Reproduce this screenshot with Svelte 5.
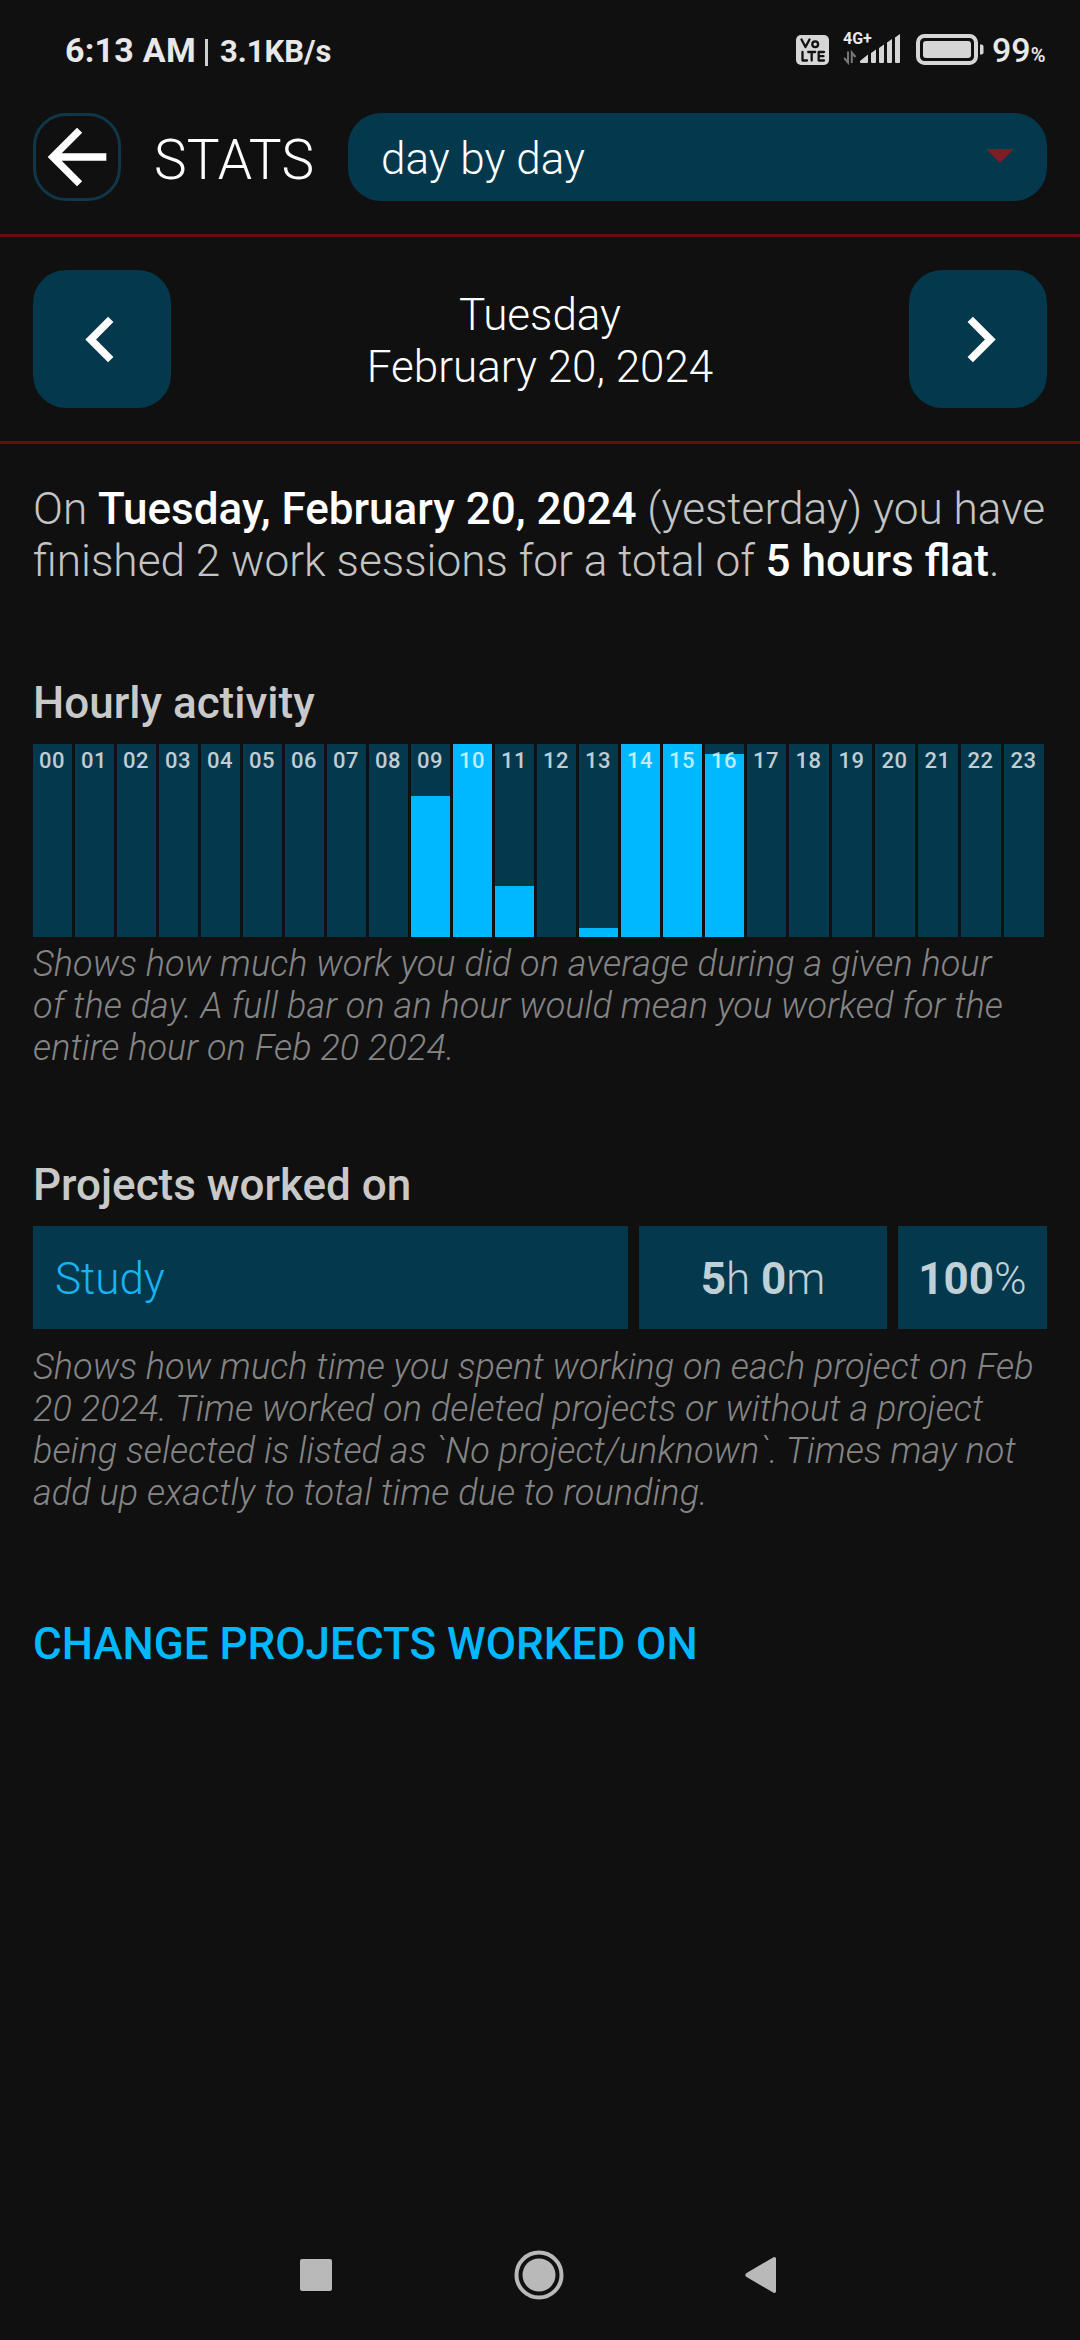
<script>
  const fills = { 9: 141, 10: 193, 11: 51, 13: 9, 14: 193, 15: 193, 16: 183 };
  const hours = Array.from({ length: 24 }, (_, i) => ({
    label: String(i).padStart(2, '0'),
    fill: ((fills[i] ?? 0) / 193) * 100
  }));
</script>

<div class="screen">
  <header class="status">
    <div class="clock"><span class="time">6:13 AM</span><span class="sep"></span><span class="rate">3.1KB/s</span></div>
    <div class="indicators">
      <svg class="volte" width="33" height="30" viewBox="0 0 33 30">
        <rect width="33" height="30" rx="5" fill="#d6d6d6" />
        <g fill="none" stroke="#101010" stroke-width="2.3" stroke-linecap="round" stroke-linejoin="round">
          <path d="M5.500 4.500l4 7.500 4-7.500" />
          <circle cx="19.200" cy="9.200" r="2.900" />
          <path d="M6.500 17v8.500h4.500M12.200 17h7M15.700 17v8.500M28 17h-5.300v8.500H28M22.700 21.200h4.800" />
        </g>
      </svg>
      <div class="mobile">
        <span class="net">4G+</span>
        <svg width="58" height="32" viewBox="0 0 58 32">
          <g fill="none" stroke="#777" stroke-width="2">
            <path d="M5 18.500V29.500L1.200 25M8.800 30V19.500l3.700 4.500" />
          </g>
          <path fill="#d6d6d6" d="M17 28l8-6.500V29a1 1 0 0 1-1 1H18a1 1 0 0 1-1-1zM28 20l5-3.500V29a1 1 0 0 1-1 1h-3a1 1 0 0 1-1-1zM36 15l5-3.500V29a1 1 0 0 1-1 1h-3a1 1 0 0 1-1-1zM44 9.500l5-3.500V29a1 1 0 0 1-1 1h-3a1 1 0 0 1-1-1zM52 4.500l5-3.500V29a1 1 0 0 1-1 1h-3a1 1 0 0 1-1-1z" />
        </svg>
      </div>
      <svg class="battery" width="69" height="31" viewBox="0 0 69 31">
        <rect x="2" y="2" width="58" height="27" rx="6.500" fill="none" stroke="#d6d6d6" stroke-width="4" />
        <rect x="7" y="7" width="48" height="17" rx="3" fill="#d6d6d6" />
        <path d="M64 10.500h1.500a2 2 0 0 1 2 2v6a2 2 0 0 1-2 2H64z" fill="#d6d6d6" />
      </svg>
      <div class="level">99<small>%</small></div>
    </div>
  </header>

  <nav class="toolbar">
    <button class="back" aria-label="Back">
      <svg viewBox="0 0 24 24"><path d="M20 11H7.830l5.590-5.590L12 4l-8 8 8 8 1.410-1.410L7.830 13H20z" /></svg>
    </button>
    <h1>STATS</h1>
    <button class="select">
      <span>day by day</span>
      <svg width="28" height="14" viewBox="0 0 28 14"><path d="M0 0h28L14 14z" /></svg>
    </button>
  </nav>

  <section class="pager">
    <button aria-label="Previous day">
      <svg class="prev" viewBox="0 0 24 24"><path d="M15.410 7.410L14 6l-6 6 6 6 1.410-1.410L10.830 12z" /></svg>
    </button>
    <div class="date">Tuesday<br />February 20, 2024</div>
    <button aria-label="Next day">
      <svg class="next" viewBox="0 0 24 24"><path d="M10 6L8.590 7.410 13.170 12l-4.580 4.590L10 18l6-6z" /></svg>
    </button>
  </section>

  <main>
    <p class="summary">
      On <b>Tuesday, February 20, 2024</b> (yesterday) you have<br />finished 2 work sessions for a total of <b>5 hours flat</b>.
    </p>

    <h2>Hourly activity</h2>
    <div class="chart">
      {#each hours as hour}
        <div class="hour">
          <div class="fill" style="height: {hour.fill}%"></div>
          <span>{hour.label}</span>
        </div>
      {/each}
    </div>
    <p class="note">
      Shows how much work you did on average during a given hour<br />of the day. A full bar on an hour would mean you worked for the<br />entire hour on Feb 20 2024.
    </p>

    <h2>Projects worked on</h2>
    <div class="project">
      <div class="name">Study</div>
      <div class="cell"><b>5</b>h&nbsp;<b>0</b>m</div>
      <div class="cell"><b>100</b>%</div>
    </div>
    <p class="note second">
      Shows how much time you spent working on each project on Feb<br />20 2024. Time worked on deleted projects or without a project<br />being selected is listed as `No project/unknown`. Times may not<br />add up exactly to total time due to rounding.
    </p>

    <button class="change">CHANGE PROJECTS WORKED ON</button>
  </main>

  <footer>
    <svg width="32" height="32" viewBox="0 0 32 32"><rect width="32" height="32" rx="2" /></svg>
    <svg width="50" height="50" viewBox="0 0 50 50">
      <circle cx="25" cy="25" r="22.500" fill="none" stroke="#b9b9b9" stroke-width="4" />
      <circle cx="25" cy="25" r="16.500" />
    </svg>
    <svg width="32" height="38" viewBox="0 0 32 38"><path d="M1.200 17.200L28.500 1.200Q31 .2 31 3V35Q31 37.800 28.500 36.800L1.200 20.800Q-.6 19 1.200 17.200z" /></svg>
  </footer>
</div>

<style>
  :global(body) {
    background: #101010;
  }
  .screen {
    box-sizing: border-box;
    width: 1080px;
    height: 2340px;
    display: flex;
    flex-direction: column;
    background: #101010;
    color: #fff;
    font: 300 44px/52px Roboto, sans-serif;
    overflow: hidden;
  }
  button {
    border: 0;
    padding: 0;
    background: none;
    color: inherit;
    font: inherit;
    text-align: left;
  }
  h1, h2, p { margin: 0; }
  svg { display: block; flex: none; }

  .status {
    height: 80px;
    box-sizing: border-box;
    padding: 30px 34px 0 65px;
    display: flex;
    justify-content: space-between;
    color: #e8e8e8;
    line-height: 40px;
  }
  .clock { display: flex; align-items: baseline; font-weight: 700; }
  .time { font-size: 34px; letter-spacing: 0.25px; }
  .sep { width: 3px; height: 27px; margin: 0 12px 0 9px; background: #d0d0d0; transform: translateY(4px); }
  .rate { font-size: 31px; }
  .indicators { display: flex; align-items: flex-start; }
  .volte { margin-top: 5px; }
  .mobile { width: 58px; height: 36px; margin-left: 14px; display: grid; }
  .mobile > * { grid-area: 1 / 1; }
  .mobile svg { margin-top: 3px; }
  .net { font-size: 16px; font-weight: 700; line-height: 16px; margin-top: 1px; }
  .battery { margin: 4px 0 0 15px; }
  .level { width: 54px; margin-left: 7px; font-size: 34px; font-weight: 500; white-space: nowrap; }
  .level small { font-size: 20px; font-weight: 600; }

  .toolbar {
    height: 157px;
    box-sizing: border-box;
    border-bottom: 3px solid #6b0b0e;
    padding: 33px 33px 0;
    display: flex;
  }
  .back {
    box-sizing: border-box;
    width: 88px;
    height: 88px;
    border: 3px solid #0f3749;
    border-radius: 33px;
  }
  .back svg { width: 88px; height: 88px; margin: -3px; fill: #fff; }
  h1 { width: 194px; padding-left: 33px; font-size: 55px; font-weight: 300; line-height: 94px; letter-spacing: 0.2px; }
  .select {
    height: 88px;
    flex: 1;
    box-sizing: border-box;
    border-radius: 33px;
    background: #03384d;
    padding: 0 33px;
    display: flex;
    align-items: center;
    justify-content: space-between;
  }
  .select span { padding-top: 4px; }
  .select svg { fill: #7f1d26; margin-top: -2px; }

  .pager {
    height: 207px;
    box-sizing: border-box;
    border-bottom: 3px solid #6b0b0e;
    padding: 33px;
    display: flex;
    justify-content: space-between;
  }
  .pager button {
    width: 138px;
    height: 138px;
    border-radius: 33px;
    background: #03384d;
    display: flex;
    align-items: center;
    justify-content: center;
  }
  .pager svg { width: 91px; height: 91px; fill: #fff; }
  .prev { margin-right: 3px; }
  .next { margin-left: 5px; }
  .date { text-align: center; padding-top: 19px; }

  main { padding: 39px 33px 0; flex: 1; color: #c4c4c4; }
  .summary { white-space: nowrap; height: 194px; font-size: 44.2px; }
  .summary b { font-size: 44px; font-weight: 500; color: #fff; }
  h2 { height: 67px; font-size: 44px; line-height: 52px; font-weight: 500; color: #c9c9c9; }
  .chart {
    height: 193px;
    display: grid;
    grid-template-columns: repeat(18, 39px) repeat(6, 40px);
    column-gap: 3px;
  }
  .hour { display: grid; background: #03384d; }
  .hour > * { grid-area: 1 / 1; }
  .fill { align-self: end; background: #00b8ff; }
  .hour span {
    z-index: 1;
    font-size: 22px;
    line-height: 26px;
    font-weight: 500;
    letter-spacing: 0.5px;
    padding: 4px 1px 0 0;
    text-align: center;
    color: rgba(255, 255, 255, 0.75);
  }
  .note {
    font-size: 36px;
    line-height: 42px;
    font-style: italic;
    letter-spacing: 0.09px;
    color: #858585;
    white-space: nowrap;
    padding-top: 6px;
    height: 216px;
  }
  .project {
    height: 103px;
    display: grid;
    grid-template-columns: 595px 248px 149px;
    grid-template-rows: 103px;
    column-gap: 11px;
    line-height: 107px;
  }
  .project > div { height: 103px; background: #03384d; }
  .name { padding-left: 22px; color: #17b3f3; }
  .cell { text-align: center; color: #c0d0d7; }
  .cell b { font-weight: 700; }
  .note.second { padding-top: 17px; height: 272px; }
  .change { color: #00b8ff; font-weight: 500; white-space: nowrap; }

  footer {
    height: 130px;
    padding: 0 303px 0 300px;
    display: flex;
    align-items: center;
    justify-content: space-between;
    fill: #b9b9b9;
  }
</style>
